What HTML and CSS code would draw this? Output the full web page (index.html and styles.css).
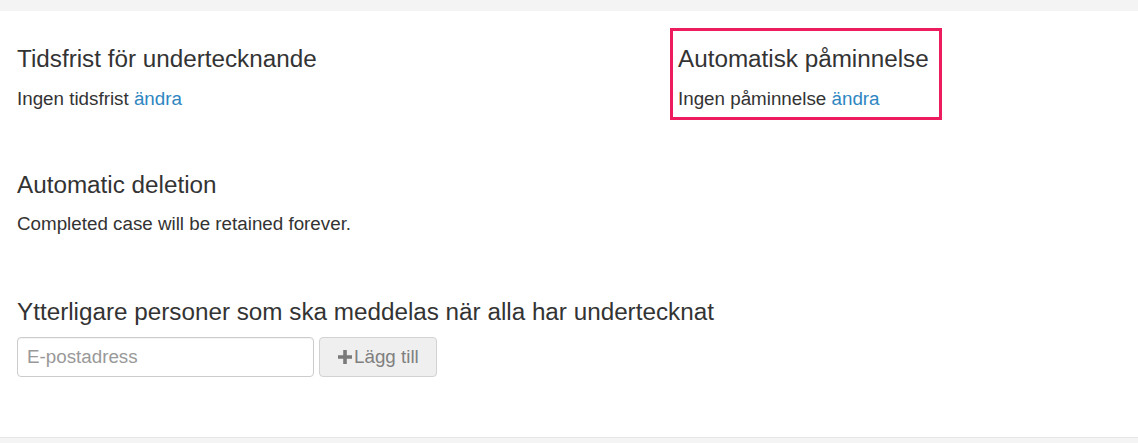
FILE: index.html
```html
<!DOCTYPE html>
<html lang="sv">
<head>
<meta charset="utf-8">
<title>Inställningar</title>
<link rel="stylesheet" href="styles.css">
</head>
<body>
<div class="panel">
  <div class="row">
    <div class="cell">
      <h3 class="title">Tidsfrist för undertecknande</h3>
      <p class="text">Ingen tidsfrist <a href="#" class="link">ändra</a></p>
    </div>
    <div class="cell highlight">
      <h3 class="title flush">Automatisk påminnelse</h3>
      <p class="text">Ingen påminnelse <a href="#" class="link">ändra</a></p>
    </div>
  </div>
  <div class="section deletion">
    <h3 class="title flush">Automatic deletion</h3>
    <p class="text">Completed case will be retained forever.</p>
  </div>
  <div class="section notify">
    <h3 class="title flush">Ytterligare personer som ska meddelas när alla har undertecknat</h3>
    <div class="add-row">
      <input class="email" type="text" placeholder="E-postadress">
      <button class="btn" type="button" disabled>
        <svg class="plus" viewBox="0 0 14 14" width="14" height="14" aria-hidden="true"><path d="M5.2 0h3.6v5.2H14v3.6H8.8V14H5.2V8.8H0V5.2h5.2z" fill="#7a7a7a"/></svg>Lägg till
      </button>
    </div>
  </div>
</div>
</body>
</html>
```

FILE: styles.css
```css
html, body {
  margin: 0;
  padding: 0;
}
body {
  background: #f4f4f4;
  font-family: "Liberation Sans", Arial, Helvetica, sans-serif;
  color: #333;
  padding-top: 11px;
}
.panel {
  background: #fff;
  border-bottom: 1px solid #e6e6e6;
  padding: 0 17px 60px 17px;
  height: 366px;
  box-sizing: content-box;
}
.row {
  display: grid;
  grid-template-columns: 656px auto;
  align-items: start;
}
.cell {
  padding-top: 35px;
}
.highlight {
  justify-self: start;
  width: 261px;
  margin-top: 20px;
  padding: 15px 0 4px 5px;
  outline: 3px solid #ec1c5e;
}
.title {
  margin: 0 0 13px 0;
  font-size: 24.25px;
  line-height: 26.6px;
  font-weight: normal;
  color: #333;
}
.text {
  margin: 0;
  font-size: 18.8px;
  line-height: 26.9px;
}
.link {
  color: #2e86c1;
  text-decoration: none;
}
.deletion {
  margin-top: 55px;
}
.notify {
  margin-top: 60.5px;
}
.add-row {
  display: flex;
  gap: 5px;
  margin-top: -1.5px;
}
.email {
  width: 297px;
  height: 40px;
  box-sizing: border-box;
  border: 1px solid #cccccc;
  border-radius: 4px;
  padding: 0 9px;
  font-family: "Liberation Sans", Arial, sans-serif;
  font-size: 18.8px;
  color: #555;
  background: #fff;
  box-shadow: inset 0 1px 1px rgba(0,0,0,0.05);
  margin: 0;
}
.email::placeholder {
  color: #999;
}
.btn {
  width: 118px;
  height: 40px;
  box-sizing: border-box;
  border: 1px solid #d2d2d2;
  border-radius: 4px;
  background: #efefef;
  color: #808080;
  font-family: "Liberation Sans", Arial, sans-serif;
  font-size: 18.8px;
  padding: 0 0 0 18px;
  display: flex;
  align-items: center;
  gap: 2px;
  margin: 0;
}
.plus {
  display: block;
  flex: none;
}
```
